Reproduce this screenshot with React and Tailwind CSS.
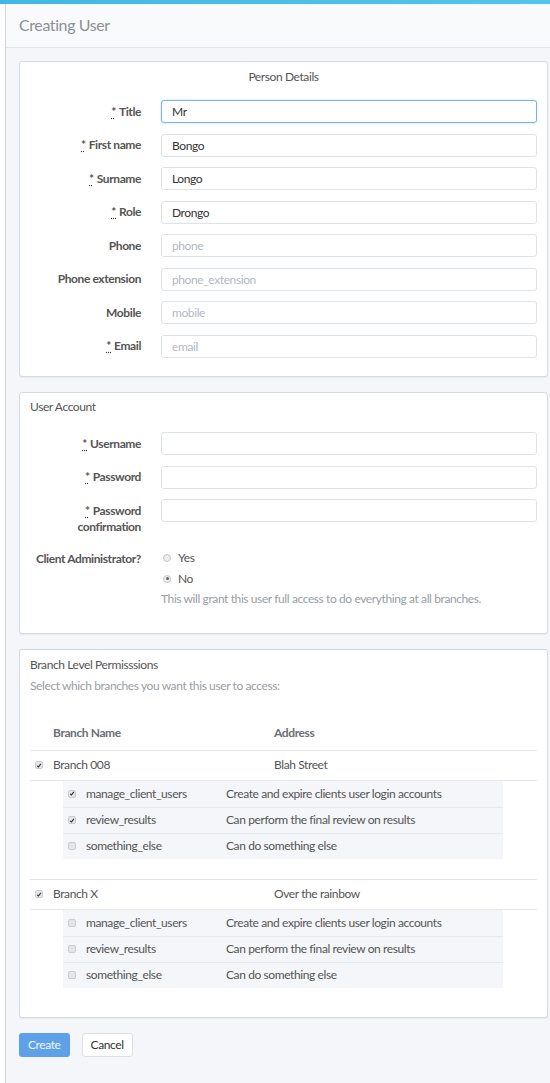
import React from "react";

const font = { fontFamily: "Lato, 'Open Sans', sans-serif" };

const Req = () => (
  <span className="underline decoration-dotted decoration-[#333] underline-offset-[2px] mr-[3px]">*</span>
);

const labelCls = "w-[131px] shrink-0 text-right font-bold text-[#555] leading-[16px] pr-[20px]";

const FieldRow = ({ label, required, value, placeholder, focused }) => (
  <div className="flex items-start mb-[10.5px]">
    <label className={labelCls + " pt-[3.5px]"}>
      {required && <Req />}
      {label}
    </label>
    <input
      type="text"
      defaultValue={value}
      placeholder={placeholder}
      className={
        "flex-1 min-w-0 h-[23px] px-[10px] text-[#333] bg-white rounded-[3px] outline-none placeholder:text-[#b4b9bf] border " +
        (focused ? "border-[#7cb3e4] shadow-[0_0_2px_rgba(102,175,233,0.5)]" : "border-[#dde3e6]")
      }
    />
  </div>
);

const Check = ({ checked }) => (
  <span className="inline-flex w-[8px] h-[8px] rounded-[2px] bg-[#e4e6e9] border border-[#c9ccd0] items-center justify-center">
    {checked && (
      <svg width="7" height="7" viewBox="0 0 8 8">
        <path d="M1.5 4.5 L3.2 6 L6.5 1.8" stroke="#333" strokeWidth="1.6" fill="none" />
      </svg>
    )}
  </span>
);

const Radio = ({ checked }) => (
  <span className="inline-flex w-[8px] h-[8px] rounded-full bg-[#eceef0] border border-[#c4c7cb] items-center justify-center">
    {checked && <span className="w-[3px] h-[3px] rounded-full bg-[#666]" />}
  </span>
);

const Panel = ({ children, className = "" }) => (
  <div className={"bg-white border border-[#d4dce3] rounded-[3px] shadow-[0_1px_1px_rgba(0,0,0,0.05)] " + className}>
    {children}
  </div>
);

const perms = [
  ["manage_client_users", "Create and expire clients user login accounts"],
  ["review_results", "Can perform the final review on results"],
  ["something_else", "Can do something else"],
];

const Branch = ({ name, address, checks }) => (
  <>
    <div className="flex items-center h-[30px] border-t border-[#e3e7ea]">
      <div className="w-[23px] pl-[5px] flex items-center">
        <Check checked />
      </div>
      <div className="w-[221px] text-[#555]">{name}</div>
      <div className="text-[#555]">{address}</div>
    </div>
    <div className="border-t border-[#e3e7ea] pl-[33px] pb-[20px]">
      <div className="w-[440px] bg-[#f4f6f9]">
        {perms.map(([p, d], i) => (
          <div key={p} className={"flex items-center h-[26px] " + (i > 0 ? "border-t border-[#e6e9ed]" : "")}>
            <div className="w-[23px] pl-[5px] flex items-center">
              <Check checked={checks[i]} />
            </div>
            <div className="w-[140px] text-[#555]">{p}</div>
            <div className="text-[#555]">{d}</div>
          </div>
        ))}
      </div>
    </div>
  </>
);

export default function App() {
  return (
    <div className="min-h-[1083px] bg-white text-[12px] tracking-[-0.4px]" style={font}>
      <div className="h-[4px] bg-gradient-to-r from-[#3fb8e3] to-[#52c6ea]" />
      <div className="ml-[5px] border-l border-[#d5d9dd] bg-[#f5f6f9] min-h-[1079px]">
        <div className="h-[44px] bg-[#f9fafb] border-b border-[#dfe4e8] flex items-center pl-[13px] pb-[1px]">
          <h1 className="text-[16px] text-[#8b9097]">Creating User</h1>
        </div>
        <div className="pl-[13px] pr-[2px] pt-[13px] pb-[26px]">
          <Panel className="px-[10px] pt-[6px] pb-[8px]">
            <div className="text-center text-[#555] mb-[14px]">Person Details</div>
            <FieldRow label="Title" required value="Mr" focused />
            <FieldRow label="First name" required value="Bongo" />
            <FieldRow label="Surname" required value="Longo" />
            <FieldRow label="Role" required value="Drongo" />
            <FieldRow label="Phone" placeholder="phone" />
            <FieldRow label="Phone extension" placeholder="phone_extension" />
            <FieldRow label="Mobile" placeholder="mobile" />
            <FieldRow label="Email" required placeholder="email" />
          </Panel>

          <Panel className="mt-[15px] px-[10px] pt-[5px] pb-[25px]">
            <div className="text-[#555] mb-[16px]">User Account</div>
            <FieldRow label="Username" required />
            <FieldRow label="Password" required />
            <div className="flex items-start mb-[15px]">
              <label className={labelCls + " pt-[3.5px]"}>
                <span className="block">
                  <Req />
                  Password
                </span>
                <span className="block">confirmation</span>
              </label>
              <input type="text" className="flex-1 min-w-0 h-[23px] px-[10px] bg-white rounded-[3px] border border-[#dde3e6] outline-none" />
            </div>
            <div className="flex items-start">
              <div className={labelCls + " whitespace-nowrap pt-[1px]"}>Client Administrator?</div>
              <div className="text-[#555]">
                <div className="flex items-center gap-[7px] h-[16px] pl-[2px]">
                  <Radio /> <span>Yes</span>
                </div>
                <div className="flex items-center gap-[7px] h-[16px] mt-[5px] pl-[2px]">
                  <Radio checked /> <span>No</span>
                </div>
                <div className="text-[#9a9ea4] mt-[3px]">This will grant this user full access to do everything at all branches.</div>
              </div>
            </div>
          </Panel>

          <Panel className="mt-[15px] px-[10px] pt-[6px] pb-[9px] border-t-[#c9d8df]">
            <div className="text-[#555]">Branch Level Permisssions</div>
            <div className="text-[#9a9ea4] mt-[3px]">Select which branches you want this user to access:</div>
            <div className="mt-[22px]">
              <div className="flex items-center h-[33px] font-bold text-[#6b6f74]">
                <div className="w-[23px]" />
                <div className="w-[221px]">Branch Name</div>
                <div>Address</div>
              </div>
              <Branch name="Branch 008" address="Blah Street" checks={[true, true, false]} />
              <Branch name="Branch X" address="Over the rainbow" checks={[false, false, false]} />
            </div>
          </Panel>

          <div className="flex gap-[12px] mt-[15px]">
            <button className="h-[24px] px-[9px] rounded-[3px] bg-[#5fa1e9] text-white/90">Create</button>
            <button className="h-[24px] px-[8px] rounded-[3px] bg-white border border-[#dcdfe3] text-[#333]">Cancel</button>
          </div>
        </div>
      </div>
    </div>
  );
}
